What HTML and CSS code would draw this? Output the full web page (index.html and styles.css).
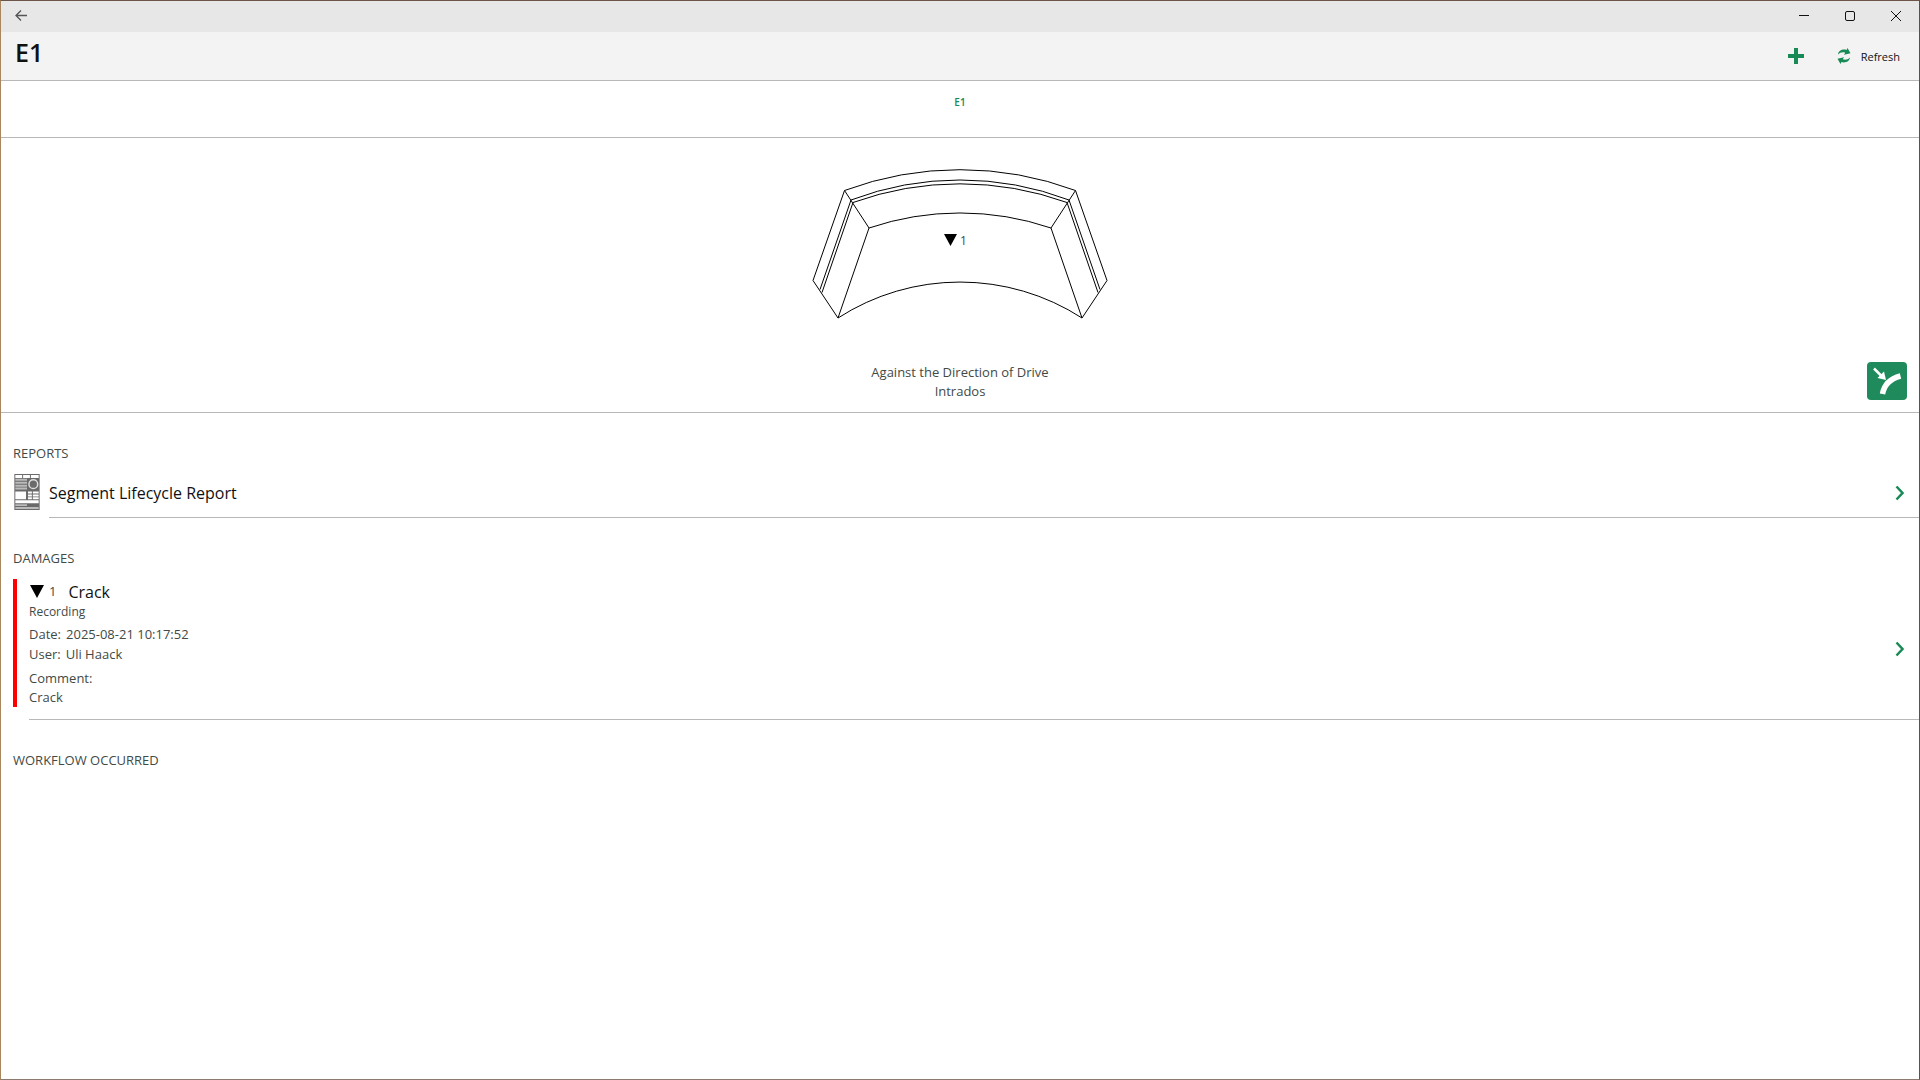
FILE: index.html
```html
<!DOCTYPE html>
<html lang="en">
<head>
<meta charset="utf-8">
<title>E1</title>
<link rel="stylesheet" href="styles.css">
</head>
<body>
<div class="window">
  <div class="titlebar">
    <button class="titlebar-button" aria-label="Back">
      <svg width="14" height="14" viewBox="0 0 14 14" fill="none" stroke="#555" stroke-width="1"><path d="M2 6.500H13M7 1.500L2 6.500L7 11.500" stroke-width="1.300"/></svg>
    </button>
    <div class="window-controls">
      <button class="titlebar-button" aria-label="Minimize">
        <svg width="12" height="12" viewBox="0 0 12 12" fill="none" stroke="#111"><path d="M1 5.500H11"/></svg>
      </button>
      <button class="titlebar-button" aria-label="Maximize">
        <svg width="12" height="12" viewBox="0 0 12 12" fill="none" stroke="#111"><rect x="1.500" y="1.500" width="9" height="9" rx="1.500"/></svg>
      </button>
      <button class="titlebar-button" aria-label="Close">
        <svg width="12" height="12" viewBox="0 0 12 12" fill="none" stroke="#111"><path d="M1 1L11 11M11 1L1 11"/></svg>
      </button>
    </div>
  </div>

  <header class="header">
    <h1 class="title">E1</h1>
    <div class="actions">
      <button class="action" aria-label="Add">
        <svg width="16" height="16" viewBox="0 0 16 16" fill="#178a55"><path d="M6 0H10V6H16V10H10V16H6V10H0V6H6Z"/></svg>
      </button>
      <button class="action">
        <svg width="14" height="16" viewBox="0 0 14 16" fill="#178a55"><path d="M1 6.500C1.500 2.500 5.500 .800 9.500 1.900L10.500 0L13.500 5.300L7 6.700L8.200 4.700C5.500 3.900 3.200 4.400 1 6.500Z"/><path d="M13 9.500C12.500 13.500 8.500 15.200 4.500 14.100L3.500 16L.500 10.700L7 9.300L5.800 11.300C8.500 12.100 10.800 11.600 13 9.500Z"/></svg>
        <span>Refresh</span>
      </button>
    </div>
  </header>

  <nav class="tabs"><a class="tab" href="#segment">E1</a></nav>

  <main>
    <section class="diagram" id="segment">
      <svg class="segment" width="296" height="150" viewBox="0 0 296 150" fill="none" stroke="#000" role="img" aria-label="Ring segment">
        <path d="M32.500 21.500A331 331 0 0 1 263.500 21.500L295 111.500L270 149L239 59L263.500 21.500M32.500 21.500L1 111.500L26 149L57 59L32.500 21.500"/>
        <path d="M39 31A307 307 0 0 1 257 31L288 120.500M39 31L8 120.500"/>
        <path d="M41 33.500A316 316 0 0 1 255 33.500L286 123.500M41 33.500L10 123.500"/>
        <path d="M57 59A283 283 0 0 1 239 59"/>
        <path d="M26 149A225 225 0 0 1 270 149"/>
        <path d="M132 65H145L138.500 77Z" fill="#000" stroke="none"/>
        <text class="marker-label" x="148" y="76">1</text>
      </svg>
      <p class="caption">Against the Direction of Drive<br>Intrados</p>
      <button class="locate" aria-label="Toggle view">
        <svg width="40" height="38" viewBox="0 0 40 38" fill="none" stroke="#fff"><path d="M7 6.500L15 14.500" stroke-width="2.500"/><path d="M19 18L10.500 16L17 9.500Z" fill="#fff" stroke="none"/><path d="M15.500 32Q18 18 33.500 14" stroke-width="5.500"/></svg>
      </button>
    </section>

    <section>
      <h2 class="section-title">REPORTS</h2>
      <a class="row report" href="#report">
        <svg width="26" height="36" viewBox="0 0 26 37"><rect width="26" height="37" fill="#6a6a6a"/><path d="M1 1H8V4H1ZM9 1H16V4H9ZM17 1H25V4H17ZM1 18H12V26H1ZM14 18H18V20H14ZM19 18H25V20H19ZM14 21H18V23H14ZM19 21H25V23H19ZM14 24H18V26H14ZM19 24H25V26H19ZM1 27H25V30H1Z" fill="#fff"/><path d="M1 6H13M1 9H13M1 12H13M1 15H13M1 32H13M1 35H25" stroke="#bbb" stroke-width="2"/><circle cx="19.500" cy="10.500" r="4.500" fill="#6a6a6a" stroke="#ddd" stroke-width="1.500"/></svg>
        <span class="row-body report-body"><span class="row-title">Segment Lifecycle Report</span>
        <svg class="chevron" width="10" height="16" viewBox="0 0 10 16"><path d="M1.500 1.500L7.500 8L1.500 14.500"/></svg></span>
      </a>
    </section>

    <section>
      <h2 class="section-title">DAMAGES</h2>
      <a class="row damage" href="#damage">
        <span class="severity"></span>
        <span class="row-body">
          <span class="damage-info">
            <span class="damage-head">
              <svg width="15" height="13" viewBox="0 0 15 13"><path d="M1 0H15L8 13Z"/></svg>
              <span class="damage-number">1</span>
              <span class="row-title">Crack</span>
            </span>
            <span class="status">Recording</span>
            <span class="field"><span>Date:</span><span>2025-08-21 10:17:52</span></span>
            <span class="field"><span>User:</span><span>Uli Haack</span></span>
            <span class="comment">Comment:<br>Crack</span>
          </span>
          <svg class="chevron" width="10" height="16" viewBox="0 0 10 16"><path d="M1.500 1.500L7.500 8L1.500 14.500"/></svg>
        </span>
      </a>
    </section>

    <section>
      <h2 class="section-title">WORKFLOW OCCURRED</h2>
    </section>
  </main>
</div>
</body>
</html>
```
FILE: styles.css
```css
* { box-sizing: border-box; }

body {
  margin: 0;
  background: #fff;
  color: #424a46;
  font: 13px/19px "Open Sans", "Noto Sans", sans-serif;
}

button {
  display: flex;
  align-items: center;
  justify-content: center;
  padding: 0;
  border: 0;
  background: none;
  color: inherit;
  font: inherit;
}

a { color: inherit; text-decoration: none; }
h1, h2, p { margin: 0; font-weight: 400; }
svg { display: block; flex: none; }

.window {
  min-height: 100vh;
  border: 1px solid;
  border-color: #6b5548 #56524e #8c7a70 #a8875f;
}

.titlebar {
  display: flex;
  justify-content: space-between;
  height: 31px;
  background: #e7e7e7;
}

.window-controls { display: flex; }
.titlebar-button { width: 46px; height: 30px; }
.titlebar > .titlebar-button { width: 40px; }

.header {
  display: flex;
  justify-content: space-between;
  height: 49px;
  padding: 0 19px 0 14px;
  border-bottom: 1px solid #b8b8b8;
  background: #f3f3f3;
}

.title {
  color: #111;
  font-size: 25px;
  font-weight: 600;
  line-height: 41px;
}

.actions { display: flex; gap: 33px; }

.action {
  gap: 10px;
  color: #111;
  font-size: 11px;
}

.tabs {
  display: flex;
  justify-content: center;
  height: 57px;
  padding-top: 12px;
  border-bottom: 1px solid #b8b8b8;
}

.tab {
  color: #178a55;
  font-size: 10px;
  font-weight: 600;
}

.diagram {
  position: relative;
  display: flex;
  flex-direction: column;
  align-items: center;
  gap: 44px;
  padding: 31px 0 11px;
  border-bottom: 1px solid #b8b8b8;
}

.marker-label {
  fill: #424a46;
  stroke: none;
  font-size: 12px;
}

.caption { text-align: center; }

.locate {
  position: absolute;
  right: 12px;
  bottom: 12px;
  width: 40px;
  height: 38px;
  border-radius: 4px;
  background: #1f8a5b;
}

.section-title {
  padding: 30px 12px 11px;
  font-size: 13px;
  line-height: 20px;
}

.row { display: flex; }

.row-body {
  display: flex;
  flex: 1;
  align-items: center;
  justify-content: space-between;
  padding-right: 14px;
  border-bottom: 1px solid #b8b8b8;
}

.row-title {
  color: #111;
  font-size: 16px;
  line-height: 22px;
}

.chevron { fill: none; stroke: #178a55; stroke-width: 2.5; }

.report { gap: 9px; padding-left: 13px; }
.report-body { height: 44px; padding-bottom: 5px; }

.damage { padding-left: 12px; }
.severity { width: 4px; margin-right: 12px; margin-bottom: 13px; background: #f00; }

.damage-info { display: flex; flex-direction: column; padding-bottom: 12px; }
.damage-head { display: flex; align-items: center; height: 25px; }
.damage-number { margin: 0 12px 0 5px; }
.status { margin-bottom: 4px; font-size: 12px; line-height: 16px; }
.field { display: flex; gap: 5px; line-height: 20px; }
.comment { margin-top: 5px; }
```
